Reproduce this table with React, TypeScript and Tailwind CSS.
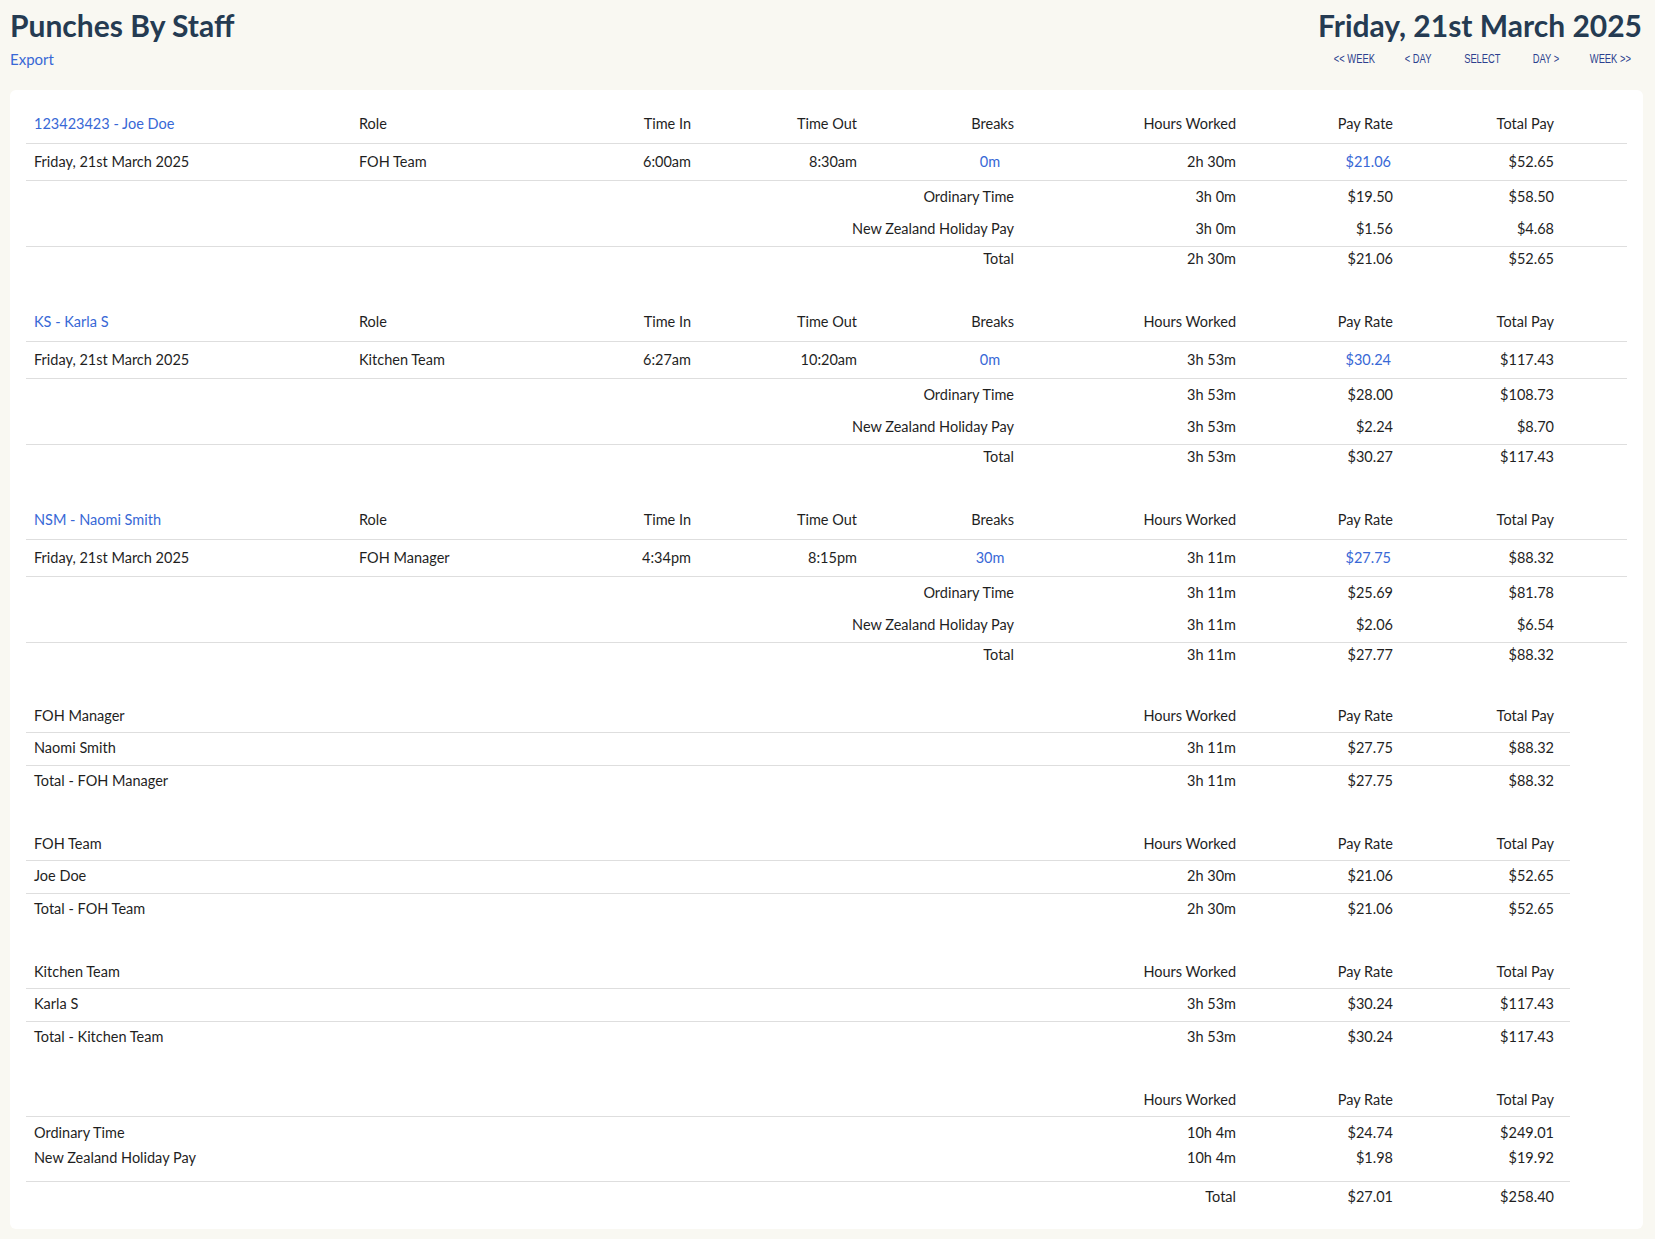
import React from "react";

type Line = [string, string, string];

type Punch = {
  name: string;
  date: string;
  role: string;
  timeIn: string;
  timeOut: string;
  breaks: string;
  hours: string;
  rate: string;
  total: string;
  ordinary: Line;
  holiday: Line;
  sum: Line;
};

const punches: Punch[] = [
  {
    name: "123423423 - Joe Doe",
    date: "Friday, 21st March 2025",
    role: "FOH Team",
    timeIn: "6:00am",
    timeOut: "8:30am",
    breaks: "0m",
    hours: "2h 30m",
    rate: "$21.06",
    total: "$52.65",
    ordinary: ["3h 0m", "$19.50", "$58.50"],
    holiday: ["3h 0m", "$1.56", "$4.68"],
    sum: ["2h 30m", "$21.06", "$52.65"],
  },
  {
    name: "KS - Karla S",
    date: "Friday, 21st March 2025",
    role: "Kitchen Team",
    timeIn: "6:27am",
    timeOut: "10:20am",
    breaks: "0m",
    hours: "3h 53m",
    rate: "$30.24",
    total: "$117.43",
    ordinary: ["3h 53m", "$28.00", "$108.73"],
    holiday: ["3h 53m", "$2.24", "$8.70"],
    sum: ["3h 53m", "$30.27", "$117.43"],
  },
  {
    name: "NSM - Naomi Smith",
    date: "Friday, 21st March 2025",
    role: "FOH Manager",
    timeIn: "4:34pm",
    timeOut: "8:15pm",
    breaks: "30m",
    hours: "3h 11m",
    rate: "$27.75",
    total: "$88.32",
    ordinary: ["3h 11m", "$25.69", "$81.78"],
    holiday: ["3h 11m", "$2.06", "$6.54"],
    sum: ["3h 11m", "$27.77", "$88.32"],
  },
];

const roles = [
  { role: "FOH Manager", staff: "Naomi Smith", vals: ["3h 11m", "$27.75", "$88.32"] },
  { role: "FOH Team", staff: "Joe Doe", vals: ["2h 30m", "$21.06", "$52.65"] },
  { role: "Kitchen Team", staff: "Karla S", vals: ["3h 53m", "$30.24", "$117.43"] },
];

const navItems = ["<< WEEK", "< DAY", "SELECT", "DAY >", "WEEK >>"];

// columns of the punch table
const c1 = "w-[325px] shrink-0 px-2";
const c2 = "w-[189px] shrink-0 px-2";
const c3 = "w-[159px] shrink-0 px-2 text-right";
const c4 = "w-[166px] shrink-0 px-2 text-right";
const c5 = "w-[157px] shrink-0 px-2 text-right";
const c6 = "w-[222px] shrink-0 px-2 text-right";
const c7 = "w-[157px] shrink-0 px-2 text-right";
const c8 = "w-[161px] shrink-0 px-2 text-right";
const c9 = "w-[65px] shrink-0";
const span5 = "w-[996px] shrink-0 px-2 text-right";

// columns of the summary tables
const s1 = "w-[996px] shrink-0 px-2";
const s2 = "w-[222px] shrink-0 px-2 text-right";
const s3 = "w-[157px] shrink-0 px-2 text-right";
const s4 = "w-[169px] shrink-0 pl-2 pr-4 text-right";

function PunchTable({ p }: { p: Punch }) {
  return (
    <div className="w-[1601px] mb-[30px]">
      <div className="flex pt-[11px] pb-[9px] border-b border-[#dedede]">
        <div className={c1}>
          <a className="text-[#3868d6]">{p.name}</a>
        </div>
        <div className={c2}>Role</div>
        <div className={c3}>Time In</div>
        <div className={c4}>Time Out</div>
        <div className={c5}>Breaks</div>
        <div className={c6}>Hours Worked</div>
        <div className={c7}>Pay Rate</div>
        <div className={c8}>Total Pay</div>
        <div className={c9}></div>
      </div>
      <div className="flex py-2 border-b border-[#dedede]">
        <div className={c1}>{p.date}</div>
        <div className={c2}>{p.role}</div>
        <div className={c3}>{p.timeIn}</div>
        <div className={c4}>{p.timeOut}</div>
        <div className={c5}>
          <a className="inline-block w-12 text-center text-[#3868d6]">{p.breaks}</a>
        </div>
        <div className={c6}>{p.hours}</div>
        <div className={c7}>
          <a className="mr-[2px] text-[#3868d6]">{p.rate}</a>
        </div>
        <div className={c8}>{p.total}</div>
        <div className={c9}></div>
      </div>
      <div className="flex pt-[6px] pb-[6px]">
        <div className={span5}>Ordinary Time</div>
        <div className={c6}>{p.ordinary[0]}</div>
        <div className={c7}>{p.ordinary[1]}</div>
        <div className={c8}>{p.ordinary[2]}</div>
        <div className={c9}></div>
      </div>
      <div className="flex pt-[6px] pb-[7px] border-b border-[#dedede]">
        <div className={span5}>New Zealand Holiday Pay</div>
        <div className={c6}>{p.holiday[0]}</div>
        <div className={c7}>{p.holiday[1]}</div>
        <div className={c8}>{p.holiday[2]}</div>
        <div className={c9}></div>
      </div>
      <div className="flex pt-[2px] pb-[2px]">
        <div className={span5}>Total</div>
        <div className={c6}>{p.sum[0]}</div>
        <div className={c7}>{p.sum[1]}</div>
        <div className={c8}>{p.sum[2]}</div>
        <div className={c9}></div>
      </div>
    </div>
  );
}

function RoleTable({ role, staff, vals }: { role: string; staff: string; vals: string[] }) {
  return (
    <div className="w-[1544px] mb-[27px]">
      <div className="flex pt-[9px] pb-[6px] border-b border-[#dedede]">
        <div className={s1}>{role}</div>
        <div className={s2}>Hours Worked</div>
        <div className={s3}>Pay Rate</div>
        <div className={s4}>Total Pay</div>
      </div>
      <div className="flex pt-[5px] pb-[7px] border-b border-[#dedede]">
        <div className={s1}>{staff}</div>
        <div className={s2}>{vals[0]}</div>
        <div className={s3}>{vals[1]}</div>
        <div className={s4}>{vals[2]}</div>
      </div>
      <div className="flex pt-[5px] pb-[7px]">
        <div className={s1}>Total - {role}</div>
        <div className={s2}>{vals[0]}</div>
        <div className={s3}>{vals[1]}</div>
        <div className={s4}>{vals[2]}</div>
      </div>
    </div>
  );
}

export default function App() {
  return (
    <div className="min-h-screen bg-[#f9f8f2] font-['Lato','Liberation_Sans',sans-serif] text-[14.5px] leading-5 text-[#1f1f1f] pb-[11px]">
      {/* cabecera */}
      <div className="h-[90px] flex justify-between items-start pl-[10px] pr-[13px] pt-[7px]">
        <div>
          <h1 className="text-[30px] leading-[36px] font-bold text-[#253b52]">Punches By Staff</h1>
          <a className="block mt-[6px] text-[15px] text-[#3868d6]">Export</a>
        </div>
        <div className="flex flex-col items-end">
          <h1 className="text-[30px] leading-[36px] font-bold text-[#253b52]">Friday, 21st March 2025</h1>
          <div className="flex mt-[9px]">
            {navItems.map((n) => (
              <button
                key={n}
                className="w-16 text-center text-[12px] leading-[14px] text-[#2c3f8e] font-['Liberation_Sans',Arial,sans-serif]"
              >
                <span className="inline-block scale-x-[0.78] whitespace-nowrap">{n}</span>
              </button>
            ))}
          </div>
        </div>
      </div>

      {/* tarjeta con tablas */}
      <div className="ml-[10px] mr-[12px] bg-white rounded-md px-4 pt-[13px] pb-4">
        {punches.map((p) => (
          <PunchTable key={p.name} p={p} />
        ))}

        {roles.map((r) => (
          <RoleTable key={r.role} role={r.role} staff={r.staff} vals={r.vals} />
        ))}

        {/* resumen final */}
        <div className="w-[1544px]">
          <div className="flex pt-[9px] pb-[6px] border-b border-[#dedede]">
            <div className={s1}></div>
            <div className={s2}>Hours Worked</div>
            <div className={s3}>Pay Rate</div>
            <div className={s4}>Total Pay</div>
          </div>
          <div className="flex pt-[6px] pb-[1px]">
            <div className={s1}>Ordinary Time</div>
            <div className={s2}>10h 4m</div>
            <div className={s3}>$24.74</div>
            <div className={s4}>$249.01</div>
          </div>
          <div className="flex pt-1 pb-[13px] border-b border-[#dedede]">
            <div className={s1}>New Zealand Holiday Pay</div>
            <div className={s2}>10h 4m</div>
            <div className={s3}>$1.98</div>
            <div className={s4}>$19.92</div>
          </div>
          <div className="flex pt-[5px] pb-1.5">
            <div className={s1}></div>
            <div className={s2}>Total</div>
            <div className={s3}>$27.01</div>
            <div className={s4}>$258.40</div>
          </div>
        </div>
      </div>
    </div>
  );
}
